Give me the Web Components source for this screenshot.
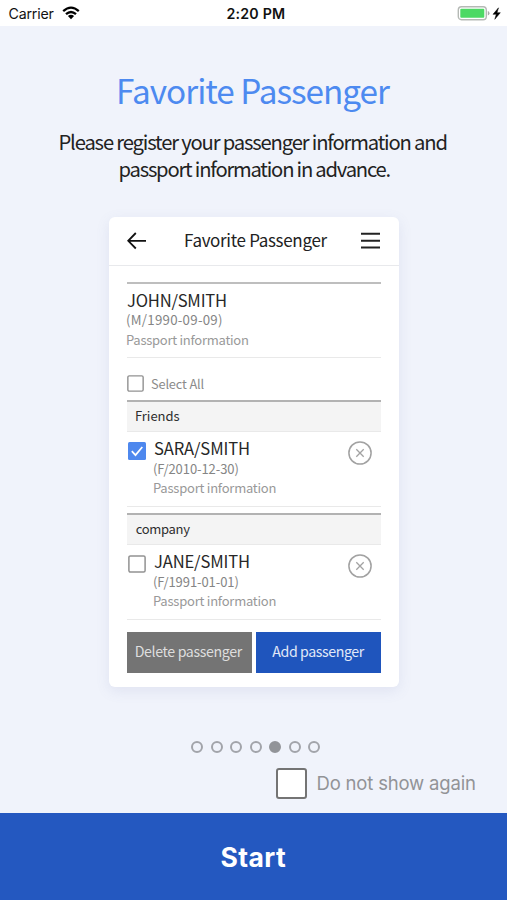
<!DOCTYPE html>
<html lang="en">
<head>
<meta charset="utf-8">
<title>Favorite Passenger</title>
<style>
html,body{margin:0;height:100%;background:#f0f3fb;overflow:hidden}
</style>
</head>
<body>
<onboarding-page></onboarding-page>
<script>
const define = (name, css, html, init) => customElements.define(name, class extends HTMLElement {
  constructor() {
    super();
    const t = document.createElement('template');
    t.innerHTML = `<style>*{box-sizing:border-box}${css}</style>${html}`;
    this.attachShadow({ mode: 'open' }).append(t.content.cloneNode(true));
  }
  connectedCallback() { if (init) init.call(this); }
});

/* One line of text, tracked so its ink spans `w` pixels starting `x` pixels from the left edge. */
const ctx = document.createElement('canvas').getContext('2d');
define('fit-text', ':host{display:block;white-space:pre;height:var(--lh,20px);line-height:var(--lh,20px);flex:none}', '<slot></slot>', function () {
  const s = getComputedStyle(this), text = this.textContent;
  const size = this.getAttribute('size');
  this.style.fontSize = size + 'px';
  ctx.font = `${s.fontWeight} ${size}px ${s.fontFamily}`;
  const m = ctx.measureText(text);
  const ink = m.actualBoundingBoxLeft + m.actualBoundingBoxRight;
  this.style.letterSpacing = ((+this.getAttribute('w') - ink) / (text.length - 1)).toFixed(3) + 'px';
  this.style.marginLeft = (+(this.getAttribute('x') || 0) + m.actualBoundingBoxLeft).toFixed(2) + 'px';
});

define('status-bar', `
  :host{display:flex;height:25.5px;background:#fff;color:#111;font-family:Inter,sans-serif;--lh:28px;align-items:flex-start}
  svg{display:block;flex:none}
  .wifi{margin:5px 0 0 8px}.grow{flex:1}.bat{margin:5px 4px 0 0}
  .l{display:flex;width:200px}.b{font-weight:600}`, `
  <div class="l"><fit-text size="14.2" x="8.5" w="46">Carrier</fit-text>
  <svg class="wifi" width="18" height="16" viewBox="0 0 18 16" fill="none" stroke="#000" stroke-width="2.3"><path d="M1.2 6.1Q9 -.8 16.8 6.1M4 9.2Q9 4.7 14 9.2"/><path d="M9 14.2L5.9 11.1Q9 8.5 12.1 11.1Z" fill="#000" stroke="none"/></svg></div>
  <fit-text class="b" size="14.2" x="26.5" w="58.5">2:20 PM</fit-text><div class="grow"></div>
  <svg class="bat" width="46" height="18" viewBox="0 0 46 18"><rect x="1.3" y="1.7" width="28" height="13" rx="3.2" fill="#fff" stroke="#b5b9b5" stroke-width="1.4"/><rect x="3.3" y="3.7" width="24" height="9" rx="1" fill="#4cd964"/><path d="M30.8 6q1.7 .4 1.7 2.2t-1.7 2.2z" fill="#a8aaa8"/><path d="M41.5 2.8L36 9.3h3.3l-1.5 5 5.5-6.6h-3.3z" fill="#000" stroke="#000" stroke-width=".5"/></svg>`);

define('check-box', `
  :host{display:block;flex:none;width:17px;height:17px}
  svg{display:block;width:100%;height:100%}
  .c{display:none}:host([checked]) .c{display:block}:host([checked]) .u{display:none}`, `
  <svg viewBox="0 0 18 18"><rect class="u" x=".9" y=".9" width="16.2" height="16.2" rx="1.5" fill="#fff" stroke="#929292" stroke-width="1.5"/>
  <g class="c"><rect width="18" height="18" rx="1.5" fill="#4e88ee"/><path d="M3.8 9.2l3.7 3.9 6.8-8.1" fill="none" stroke="#fff" stroke-width="1.7"/></g></svg>`);

define('remove-icon', ':host{display:block;width:24px;height:24px;flex:none}svg{display:block}', `
  <svg width="24" height="24" viewBox="0 0 24 24" fill="none" stroke="#a2a2a2"><circle cx="12" cy="12" r="11.1" stroke-width="1.5"/><path d="M8.3 8.3l7.4 7.4M15.7 8.3l-7.4 7.4" stroke-width="1.3"/></svg>`);

define('group-title', `
  :host{display:block;height:31.5px;border-top:2px solid #b2b2b2;border-bottom:1px solid #e9e9e9;background:#f4f4f4;color:#2e2e2e;--lh:28.5px}`, '<slot></slot>');

define('passenger-row', `
  :host{display:flex;height:75.5px;border-bottom:1px solid #e9e9e9;color:#272727}
  check-box{width:18px;height:18px;margin:10px 0 0 .5px}
  .t{width:194px;padding:7.5px 0 0 8.5px}
  remove-icon{margin:9.5px 0 0 8px}
  ::slotted(*){--lh:19.5px}`, `
  <check-box></check-box><div class="t"><slot></slot></div><remove-icon></remove-icon>`, function () {
  if (this.hasAttribute('checked')) this.shadowRoot.querySelector('check-box').setAttribute('checked', '');
});

define('action-button', ':host{display:block;width:125px;height:41px;background:var(--bg);color:var(--fg);--lh:38px}', '<slot></slot>');

define('phone-card', `
  :host{display:block;width:290px;height:470.5px;margin-left:108.5px;background:#fff;border-radius:6px;box-shadow:0 4px 14px rgba(110,115,175,.12)}
  header{display:flex;height:49.5px;border-bottom:1px solid #e8e9ec;padding-left:18px;color:#222;--lh:46.5px}
  header svg{display:block;flex:none;margin-top:14.5px}
  .body{padding:15.5px 18px 0 18.5px}
  .me{height:76.5px;border-top:2px solid #bebebe;border-bottom:1px solid #e9e9e9;padding-top:6px;--lh:19.5px}
  .me .name{--lh:20.5px}
  .name{color:#272727}.dt{color:#858585}.pp{color:#999}
  .all{display:flex;height:42px;padding-top:16.5px;color:#8b8b8b;--lh:17px}
  .gap{height:6px}
  .buttons{display:flex;justify-content:space-between;margin-top:11.5px;width:254px}`, `
  <header>
    <svg width="20" height="20" viewBox="0 0 20 20" fill="none" stroke="#111" stroke-width="1.8"><path d="M8.8 2L1.2 9.8l7.6 7.7M1.2 9.8H19"/></svg>
    <fit-text size="17" x="38.5" w="142.5">Favorite Passenger</fit-text>
    <svg style="margin-left:auto;margin-right:18.5px" width="19" height="20" viewBox="0 0 19 20" stroke="#222" stroke-width="2"><path d="M0 2.7h19M0 9.7h19M0 16.4h19"/></svg>
  </header>
  <div class="body">
    <section class="me">
      <fit-text class="name" size="16.6" w="99">JOHN/SMITH</fit-text>
      <fit-text class="dt" size="13.3" w="95">(M/1990-09-09)</fit-text>
      <fit-text class="pp" size="13" w="121">Passport information</fit-text>
    </section>
    <div class="all"><check-box></check-box><fit-text size="12.8" x="7" w="53.5">Select All</fit-text></div>
    <group-title><fit-text size="13" x="9" w="43.5">Friends</fit-text></group-title>
    <passenger-row checked>
      <fit-text class="name" size="16.6" w="95">SARA/SMITH</fit-text>
      <fit-text class="dt" size="13" w="84.5">(F/2010-12-30)</fit-text>
      <fit-text class="pp" size="13" w="121.5">Passport information</fit-text>
    </passenger-row>
    <div class="gap"></div>
    <group-title><fit-text size="13" x="8.7" w="54.5">company</fit-text></group-title>
    <passenger-row>
      <fit-text class="name" size="16.6" w="95">JANE/SMITH</fit-text>
      <fit-text class="dt" size="13" w="84.5">(F/1991-01-01)</fit-text>
      <fit-text class="pp" size="13" w="121.5">Passport information</fit-text>
    </passenger-row>
    <div class="buttons">
      <action-button style="--bg:#747474;--fg:#dedede"><fit-text size="14.2" x="8.7" w="107">Delete passenger</fit-text></action-button>
      <action-button style="--bg:#1f55bd;--fg:#e1e9f8"><fit-text size="14.2" x="16.3" w="92.5">Add passenger</fit-text></action-button>
    </div>
  </div>`);

define('page-dots', `
  :host{display:flex;gap:7.5px;height:12px;padding-left:191px}
  i{width:12px;height:12px;border:2px solid #a2a4aa;border-radius:50%}
  i.on{background:#929499;border-color:#929499}`, '<i></i><i></i><i></i><i></i><i class="on"></i><i></i><i></i>');

define('onboarding-page', `
  :host{display:flex;flex-direction:column;width:507px;height:900px;background:#f0f3fb;font-family:"Noto Sans CJK KR","Noto Sans CJK JP",sans-serif}
  .title{margin-top:44px;color:#4d8af0;--lh:40px}
  .sub{margin-top:18px;height:89px;color:#222;--lh:27.5px}
  page-dots{margin-top:54px}
  .again{display:flex;margin-top:15px;padding-left:276px;font-family:Inter,sans-serif;color:#929397;--lh:30px}
  .again b{width:31px;height:31px;border:2px solid #747474;border-radius:3px;background:#fff}
  .start{margin-top:auto;height:87px;background:#2458c0;color:#fff;font-family:Inter,sans-serif;font-weight:700;--lh:88px}`, `
  <status-bar></status-bar>
  <fit-text class="title" size="33.3" x="119" w="271">Favorite Passenger</fit-text>
  <div class="sub"><fit-text size="20.2" x="60.5" w="386">Please register your passenger information and</fit-text>
  <fit-text size="20.2" x="119.5" w="271">passport information in advance.</fit-text></div>
  <phone-card></phone-card>
  <page-dots></page-dots>
  <div class="again"><b></b><fit-text size="18.5" x="10.5" w="157.5">Do not show again</fit-text></div>
  <div class="start"><fit-text size="26.5" x="221.5" w="64.5">Start</fit-text></div>`);
</script>
</body>
</html>
